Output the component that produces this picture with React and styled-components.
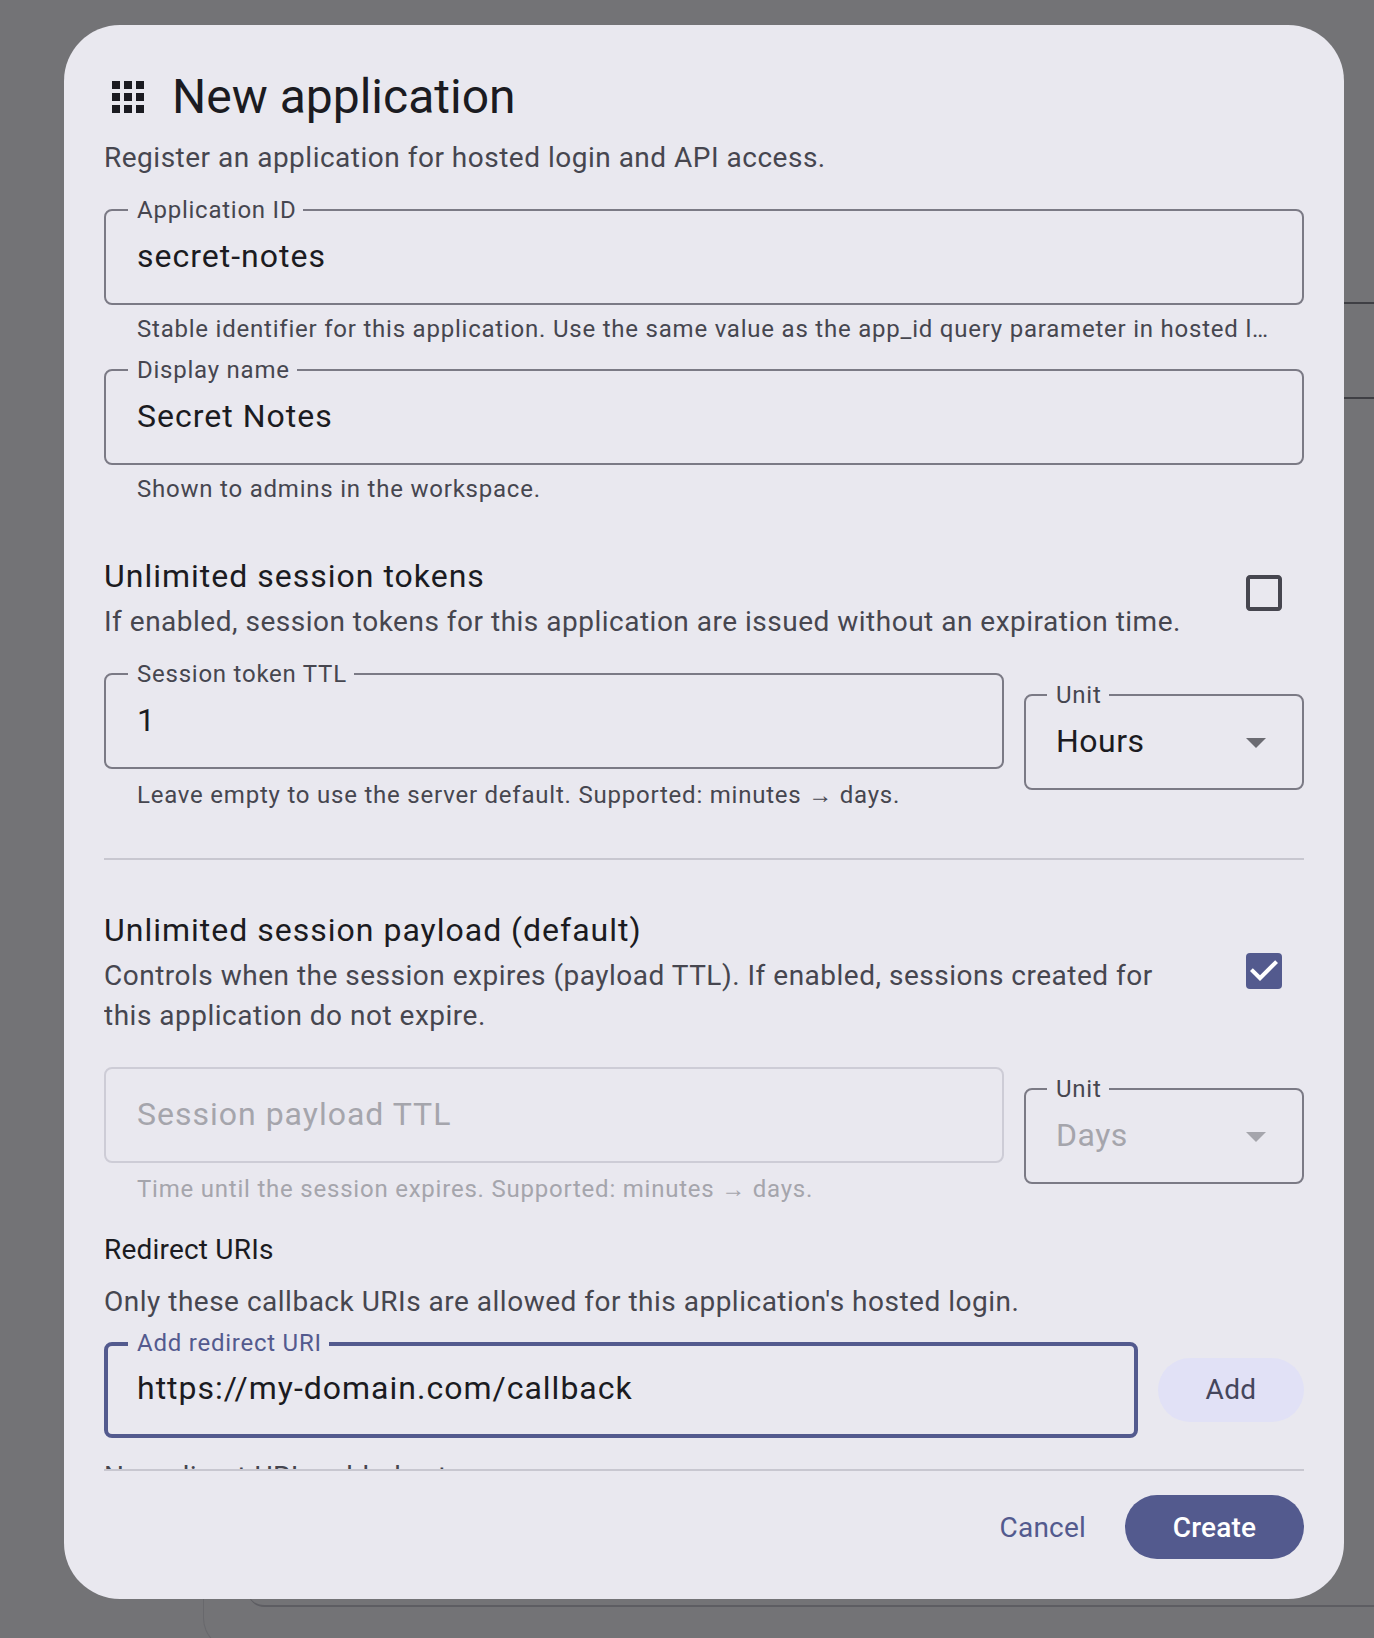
import React from "react";
import styled, { createGlobalStyle } from "styled-components";

const primary = "#535a8e";
const surface = "#e9e8ef";
const onSurface = "#1b1b21";
const variant = "#46464f";
const outline = "#7b7a85";
const divider = "#c8c7d0";

const Global = createGlobalStyle`
  html, body { margin: 0; padding: 0; background: #737376; }
  * { box-sizing: border-box; }
  body { font-family: Roboto, "Liberation Sans", sans-serif; }
`;

const Page = styled.div`
  position: relative;
  width: 1374px;
  height: 1638px;
  overflow: hidden;
  background: #737376;
  padding: 25px 30px 39px 64px;
`;

const EdgeLine = styled.div`
  position: absolute;
  right: 0;
  top: ${(p) => p.$top}px;
  width: 40px;
  height: 2px;
  background: #3f3f44;
`;

const BehindOuter = styled.div`
  position: absolute;
  left: 203px;
  top: 1500px;
  width: 1300px;
  height: 150px;
  border-left: 1px solid #68686c;
  border-bottom: 1px solid #68686c;
  border-bottom-left-radius: 32px;
`;

const BehindInner = styled.div`
  position: absolute;
  left: 248px;
  top: 1500px;
  width: 1300px;
  height: 107px;
  border-bottom: 2px solid #5d5d62;
  border-bottom-left-radius: 16px;
`;

const Dialog = styled.div`
  position: relative;
  display: flex;
  flex-direction: column;
  width: 1280px;
  height: 1574px;
  background: ${surface};
  border-radius: 56px;
  padding: 40px;
`;

const Header = styled.div`
  display: flex;
  align-items: center;
  gap: 20px;
  height: 64px;
`;

const Title = styled.h2`
  margin: 0;
  font-size: 48px;
  line-height: 64px;
  font-weight: 400;
  color: ${onSurface};
`;

const Subtitle = styled.p`
  margin: 9px 0 0;
  font-size: 28px;
  line-height: 40px;
  letter-spacing: 0.5px;
  color: ${variant};
`;

const Body = styled.div`
  flex: 1;
  min-height: 0;
  overflow: hidden;
  display: flex;
  flex-direction: column;
`;

const FieldGroup = styled.div`
  min-width: 0;
  flex: ${(p) => (p.$grow ? 1 : "none")};
  margin-top: ${(p) => p.$mt || 0}px;
`;

const Box = styled.div`
  position: relative;
  display: flex;
  align-items: center;
  justify-content: space-between;
  height: 96px;
  padding: 0 ${(p) => (p.$select ? 22 : 32)}px 0 ${(p) => (p.$select ? 30 : p.$focus ? 29 : 31)}px;
  border: ${(p) => (p.$focus ? 4 : 2)}px solid
    ${(p) => (p.$focus ? primary : p.$faint ? "#cdccd6" : outline)};
  border-radius: 8px;
`;

const Label = styled.span`
  position: absolute;
  top: ${(p) => (p.$focus ? -3 : -1)}px;
  left: ${(p) => (p.$focus ? 20 : p.$select ? 21 : 22)}px;
  transform: translateY(-50%);
  padding: 0 7px 0 9px;
  background: ${surface};
  font-size: 24px;
  line-height: 32px;
  letter-spacing: 0.76px;
  white-space: nowrap;
  color: ${(p) => (p.$focus ? primary : variant)};
`;

const Value = styled.span`
  margin-bottom: ${(p) => (p.$focus ? 4 : 3)}px;
  font-size: 32px;
  line-height: 44px;
  letter-spacing: ${(p) => (p.$tight ? 0.5 : 1)}px;
  color: ${(p) => (p.$muted ? "#a5a5ac" : onSurface)};
`;

const Helper = styled.div`
  margin-top: ${(p) => p.$gap || 8}px;
  padding: 0 33px;
  font-size: 24px;
  line-height: 32px;
  letter-spacing: 0.78px;
  white-space: nowrap;
  overflow: hidden;
  text-overflow: ellipsis;
  color: ${(p) => (p.$muted ? "#a5a5ac" : variant)};
`;

const ToggleRow = styled.div`
  display: flex;
  align-items: flex-start;
  justify-content: space-between;
  margin-top: ${(p) => p.$mt}px;
`;

const ToggleText = styled.div`
  width: 1081px;
`;

const ToggleTitle = styled.div`
  font-size: 32px;
  line-height: 44px;
  letter-spacing: 1px;
  color: ${onSurface};
`;

const ToggleDesc = styled.div`
  margin-top: 4px;
  font-size: 28px;
  line-height: 40px;
  letter-spacing: 0.5px;
  color: ${variant};
`;

const CheckSlot = styled.div`
  width: 48px;
  height: 48px;
  margin: ${(p) => p.$offset}px 16px 0 0;
  flex: none;
`;

const TtlRow = styled.div`
  display: flex;
  align-items: center;
  gap: 20px;
  margin-top: ${(p) => p.$mt}px;
`;

const UnitCol = styled.div`
  width: 280px;
  flex: none;
`;

const Divider = styled.div`
  height: 2px;
  flex: none;
  margin-top: ${(p) => p.$mt || 0}px;
  background: ${divider};
`;

const SectionLabel = styled.div`
  margin-top: 25px;
  font-size: 28px;
  line-height: 40px;
  letter-spacing: 0.2px;
  color: ${onSurface};
`;

const SectionDesc = styled.div`
  margin-top: 12px;
  font-size: 28px;
  line-height: 40px;
  letter-spacing: 0.5px;
  color: ${variant};
`;

const AddRow = styled.div`
  display: flex;
  align-items: center;
  gap: 20px;
  margin-top: 20px;
`;

const AddButton = styled.button`
  flex: none;
  width: 146px;
  height: 64px;
  border: 0;
  border-radius: 32px;
  background: #e1e1f6;
  font: 400 28px/40px Roboto, sans-serif;
  letter-spacing: 0.4px;
  color: #44465c;
`;

const EmptyNote = styled.div`
  margin-top: 19px;
  font-size: 28px;
  line-height: 40px;
  letter-spacing: 0.5px;
  color: ${variant};
  flex: none;
`;

const Footer = styled.div`
  display: flex;
  justify-content: flex-end;
  gap: 16px;
  padding-top: 24px;
  border-top: 2px solid ${divider};
`;

const TextButton = styled.button`
  height: 64px;
  padding: 2px 23px 0 24px;
  border: 0;
  background: transparent;
  font: 400 28px/40px Roboto, sans-serif;
  letter-spacing: 0.2px;
  color: ${primary};
`;

const FilledButton = styled.button`
  width: 179px;
  height: 64px;
  padding: 2px 0 0;
  border: 0;
  border-radius: 32px;
  background: ${primary};
  font: 500 28px/40px Roboto, sans-serif;
  letter-spacing: 0.2px;
  color: #fff;
`;

const AppsIcon = () => (
  <svg width="48" height="48" viewBox="0 0 24 24" fill={onSurface}>
    <path d="M4 8h4V4H4v4zm6 12h4v-4h-4v4zm-6 0h4v-4H4v4zm0-6h4v-4H4v4zm6 0h4v-4h-4v4zm6-10v4h4V4h-4zm-6 4h4V4h-4v4zm6 6h4v-4h-4v4zm0 6h4v-4h-4v4z" />
  </svg>
);

const CheckOff = () => (
  <svg width="48" height="48" viewBox="0 0 24 24" fill={variant}>
    <path d="M19 5v14H5V5h14m0-2H5c-1.1 0-2 .9-2 2v14c0 1.1.9 2 2 2h14c1.1 0 2-.9 2-2V5c0-1.1-.9-2-2-2z" />
  </svg>
);

const CheckOn = () => (
  <svg width="48" height="48" viewBox="0 0 24 24">
    <rect x="3" y="3" width="18" height="18" rx="2" fill={primary} />
    <path fill="#fff" d="M10 17l-5-5 1.41-1.41L10 14.17l7.59-7.59L19 8l-9 9z" />
  </svg>
);

const Arrow = ({ faint }) => (
  <svg width="48" height="48" viewBox="0 0 24 24" fill={faint ? "#a5a5ac" : "#6b6b72"}>
    <path d="M7 10l5 5 5-5z" />
  </svg>
);

const Field = ({ label, value, helper, helperGap, grow, focus, mt }) => (
  <FieldGroup $grow={grow} $mt={mt}>
    <Box $focus={focus}>
      <Label $focus={focus}>{label}</Label>
      <Value $focus={focus}>{value}</Value>
    </Box>
    {helper && <Helper $gap={helperGap}>{helper}</Helper>}
  </FieldGroup>
);

const Select = ({ value, muted }) => (
  <UnitCol>
    <Box $select>
      <Label $select>Unit</Label>
      <Value $muted={muted} $tight>
        {value}
      </Value>
      <Arrow faint={muted} />
    </Box>
  </UnitCol>
);

export default function App() {
  return (
    <Page>
      <Global />
      <EdgeLine $top={302} />
      <EdgeLine $top={397} />
      <BehindOuter />
      <BehindInner />
      <Dialog>
        <Header>
          <AppsIcon />
          <Title>New application</Title>
        </Header>
        <Subtitle>Register an application for hosted login and API access.</Subtitle>
        <Body>
          <Field
            mt={31}
            label="Application ID"
            value="secret-notes"
            helper="Stable identifier for this application. Use the same value as the app_id query parameter in hosted login."
          />
          <Field mt={24} label="Display name" value="Secret Notes" helper="Shown to admins in the workspace." />

          <ToggleRow $mt={49}>
            <ToggleText>
              <ToggleTitle>Unlimited session tokens</ToggleTitle>
              <ToggleDesc>If enabled, session tokens for this application are issued without an expiration time.</ToggleDesc>
            </ToggleText>
            <CheckSlot $offset={15}>
              <CheckOff />
            </CheckSlot>
          </ToggleRow>

          <TtlRow $mt={31}>
            <Field
              grow
              label="Session token TTL"
              value="1"
              helperGap={10}
              helper="Leave empty to use the server default. Supported: minutes → days."
            />
            <Select value="Hours" />
          </TtlRow>

          <Divider $mt={47} />

          <ToggleRow $mt={48}>
            <ToggleText>
              <ToggleTitle>Unlimited session payload (default)</ToggleTitle>
              <ToggleDesc>
                Controls when the session expires (payload TTL). If enabled, sessions created for this application do
                not expire.
              </ToggleDesc>
            </ToggleText>
            <CheckSlot $offset={39}>
              <CheckOn />
            </CheckSlot>
          </ToggleRow>

          <TtlRow $mt={31}>
            <FieldGroup $grow>
              <Box $faint>
                <Value $muted>Session payload TTL</Value>
              </Box>
              <Helper $muted $gap={10}>
                Time until the session expires. Supported: minutes → days.
              </Helper>
            </FieldGroup>
            <Select value="Days" muted />
          </TtlRow>

          <SectionLabel>Redirect URIs</SectionLabel>
          <SectionDesc>Only these callback URIs are allowed for this application's hosted login.</SectionDesc>

          <AddRow>
            <Field grow focus label="Add redirect URI" value="https://my-domain.com/callback" />
            <AddButton>Add</AddButton>
          </AddRow>

          <EmptyNote>No redirect URIs added yet.</EmptyNote>
        </Body>
        <Footer>
          <TextButton>Cancel</TextButton>
          <FilledButton>Create</FilledButton>
        </Footer>
      </Dialog>
    </Page>
  );
}
